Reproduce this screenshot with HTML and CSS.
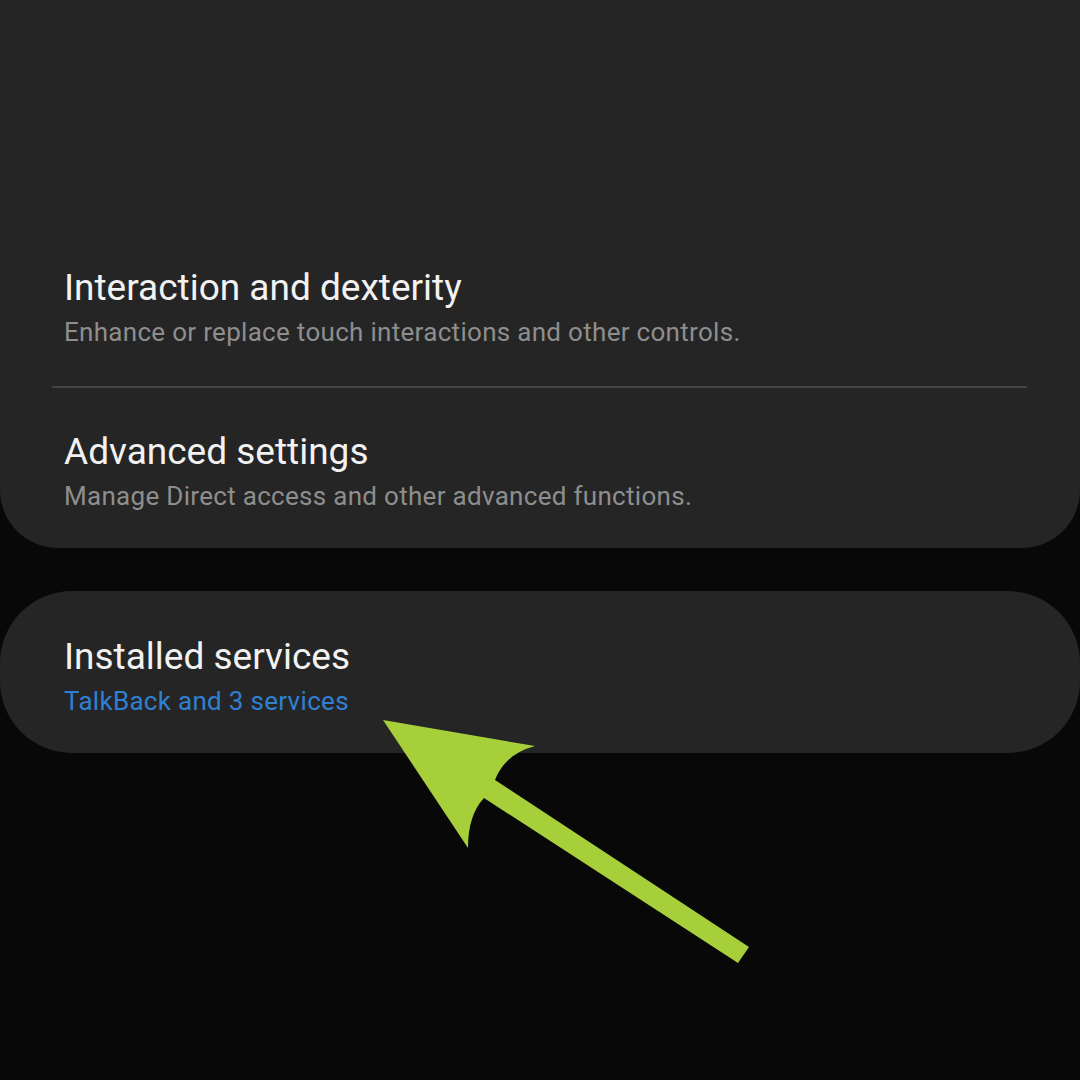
FILE: index.html
```html
<!DOCTYPE html>
<html lang="en">
<head>
<meta charset="utf-8">
<title>Accessibility</title>
<link rel="stylesheet" href="styles.css">
</head>
<body>
<main class="screen">
  <section class="card card-top">
    <div class="item item-first">
      <div class="title">Interaction and dexterity</div>
      <div class="subtitle">Enhance or replace touch interactions and other controls.</div>
    </div>
    <div class="divider"></div>
    <div class="item item-second">
      <div class="title">Advanced settings</div>
      <div class="subtitle">Manage Direct access and other advanced functions.</div>
    </div>
  </section>
  <section class="card card-pill">
    <div class="item">
      <div class="title">Installed services</div>
      <div class="subtitle accent">TalkBack and 3 services</div>
    </div>
  </section>
  <svg class="arrow" width="1080" height="1080" viewBox="0 0 1080 1080" aria-hidden="true">
    <path d="M383,720 L535,746 Q505,754 495,780 L749,947 L738,963 L484,798 Q468,815 468,848 Z" fill="#a6cf3a"/>
  </svg>
</main>
</body>
</html>
```
FILE: styles.css
```css
* { box-sizing: border-box; }
html, body {
  margin: 0;
  padding: 0;
  background: #080808;
}
.screen {
  position: relative;
  width: 1080px;
  height: 1080px;
  overflow: hidden;
  font-family: Roboto, "Noto Sans", sans-serif;
}
.card {
  background: #252525;
}
.card-top {
  border-radius: 0 0 58px 58px;
  padding-top: 266px;
  padding-bottom: 37px;
}
.card-pill {
  margin-top: 43px;
  border-radius: 72px;
  padding-top: 44px;
  padding-bottom: 37px;
}
.item {
  padding: 0 64px;
}
.item-first {
  padding-bottom: 39px;
}
.item-second {
  padding-top: 42px;
}
.title {
  font-size: 37px;
  line-height: 44px;
  color: #f2f2f2;
}
.subtitle {
  margin-top: 7px;
  font-size: 26px;
  line-height: 30px;
  letter-spacing: 0.3px;
  color: #8e8e8e;
}
.subtitle.accent {
  color: #2f80d2;
}
.divider {
  height: 2px;
  margin: 0 53px 0 52px;
  background: #444444;
}
.arrow {
  position: absolute;
  left: 0;
  top: 0;
}
```
